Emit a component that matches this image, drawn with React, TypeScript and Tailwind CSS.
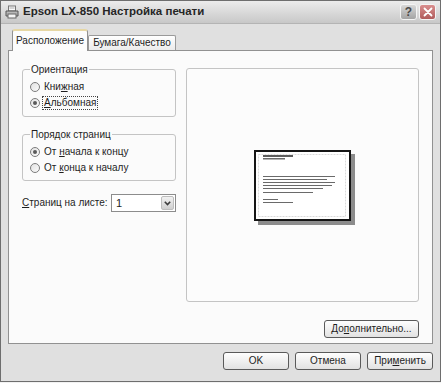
import React from "react";

function PrinterIcon() {
  return (
    <svg width="14" height="14" viewBox="0 0 14 14">
      <rect x="3.5" y="1" width="7" height="5" fill="#fafafa" stroke="#777" strokeWidth="1" />
      <path d="M1 6 L13 6 L13 11 L1 11 Z" fill="#b8b8b8" stroke="#555" strokeWidth="1" />
      <rect x="3" y="9" width="8" height="4" fill="#f4f4f4" stroke="#666" strokeWidth="1" />
      <line x1="4.5" y1="3" x2="9.5" y2="3" stroke="#999" strokeWidth="0.8" />
    </svg>
  );
}

function Radio({ checked, focus, children }: { checked?: boolean; focus?: boolean; children: React.ReactNode }) {
  return (
    <div className="h-[16px] flex items-center">
      <div className="w-[10px] h-[10px] rounded-full border border-[#7c7c7c] bg-gradient-to-br from-[#e2e2e2] to-[#fbfbfb] flex items-center justify-center">
        {checked && <div className="w-[4px] h-[4px] rounded-full bg-[#5a5a5a]" />}
      </div>
      <span className={"ml-[2px] px-[1px] leading-[12px] " + (focus ? "border border-dotted border-[#444]" : "border border-transparent")}>
        {children}
      </span>
    </div>
  );
}

function Btn({ w, children }: { w: string; children: React.ReactNode }) {
  return (
    <div
      className={
        w +
        " h-[18px] rounded-[3px] border border-[#5a5a5a] bg-gradient-to-b from-[#fefefe] to-[#e2e2e2] flex items-center justify-center text-[10px] text-[#1e1e1e]"
      }
    >
      {children}
    </div>
  );
}

export default function App() {
  return (
    <div className="w-[441px] h-[383px] bg-[#f2f2f2] font-['Liberation_Sans',Arial,sans-serif] text-[10px] text-[#1e1e1e] leading-none">
      <div className="w-[441px] h-[382px] border border-[#6e6e6e] flex flex-col bg-[#e0e0e0]">
        {/* title bar */}
        <div className="h-[23px] flex items-center pl-[4px] pr-[4px] bg-gradient-to-b from-[#ececec] to-[#c8c8c8] border-b border-[#b4b4b4]">
          <PrinterIcon />
          <span className="ml-[4px] font-bold text-[11.5px] text-[#262626]">Epson LX-850 Настройка печати</span>
          <div className="ml-auto flex gap-[2px]">
            <div className="w-[17px] h-[16px] rounded-[3px] border border-[#f4f4f4] bg-gradient-to-b from-[#d8d8d8] to-[#a4a4a4] flex items-center justify-center text-[12px] font-bold text-[#4a4a4a]">
              ?
            </div>
            <div className="w-[17px] h-[16px] rounded-[3px] border border-[#f4f4f4] bg-gradient-to-b from-[#d98e8e] to-[#b05c5c] flex items-center justify-center">
              <svg width="10" height="10" viewBox="0 0 10 10">
                <path d="M1.5 1.5 L8.5 8.5 M8.5 1.5 L1.5 8.5" stroke="#ffffff" strokeWidth="1.8" strokeLinecap="round" />
              </svg>
            </div>
          </div>
        </div>

        {/* body */}
        <div className="flex-1 flex flex-col px-[7px]">
          {/* tabs */}
          <div className="h-[26px] flex items-end pl-[4px]">
            <div className="relative z-10 -mb-px w-[76px] h-[22px] bg-[#fcfcfc] border border-b-0 border-[#919191] border-t-2 border-t-[#e6d7a4] rounded-t-[3px] flex items-center justify-center">
              Расположение
            </div>
            <div className="w-[88px] h-[15px] bg-gradient-to-b from-[#ffffff] to-[#ebebeb] border border-b-0 border-[#9a9a9a] rounded-t-[2px] flex items-center justify-center">
              Бумага/Качество
            </div>
          </div>

          {/* panel */}
          <div className="h-[294px] border border-[#919191] bg-[#fbfbfb] flex flex-col pt-[12px] px-[13px]">
            <div className="flex gap-[10px]">
              <div className="w-[154px] flex flex-col">
                <fieldset className="border border-[#c4c4c4] rounded-[3px] px-[7px] pt-[3px] pb-[5px]">
                  <legend className="px-[1px] leading-[13px]">Ориентация</legend>
                  <Radio>
                    Кни<span className="underline">ж</span>ная
                  </Radio>
                  <Radio checked focus>
                    <span className="underline">А</span>льбомная
                  </Radio>
                </fieldset>
                <fieldset className="mt-[11px] border border-[#c4c4c4] rounded-[3px] px-[7px] pt-[3px] pb-[4px]">
                  <legend className="px-[1px] leading-[13px]">Порядок страниц</legend>
                  <Radio checked>
                    От <span className="underline">н</span>ачала к концу
                  </Radio>
                  <Radio>
                    От <span className="underline">к</span>онца к началу
                  </Radio>
                </fieldset>
                <div className="mt-[13px] h-[18px] flex items-center">
                  <span>
                    <span className="underline">С</span>траниц на листе:
                  </span>
                  <div className="ml-auto w-[65px] h-[18px] border border-[#8c8c8c] bg-white flex items-center">
                    <span className="pl-[4px] text-[11px] flex-1">1</span>
                    <div className="w-[13px] h-[14px] mr-[1px] rounded-[2px] border border-[#bdbdbd] bg-gradient-to-b from-[#f2f2f2] to-[#cfcfcf] flex items-center justify-center">
                      <svg width="7" height="5" viewBox="0 0 7 5">
                        <path d="M0.8 0.8 L3.5 3.6 L6.2 0.8" fill="none" stroke="#3c3c3c" strokeWidth="1.6" />
                      </svg>
                    </div>
                  </div>
                </div>
              </div>

              {/* preview */}
              <div className="mt-[5px] w-[233px] h-[234px] border border-[#c4c4c4] rounded-[3px] bg-[#fcfcfc] flex items-center justify-center">
                <div className="w-[97px] h-[71px] border-2 border-[#151515] bg-white shadow-[4px_4px_0_#8c8c8c]">
                  <svg width="93" height="67" viewBox="0 0 93 67">
                    <rect x="2.5" y="2.5" width="87" height="62" fill="none" stroke="#dadada" strokeWidth="1" strokeDasharray="2 1" />
                    <rect x="7" y="3" width="30" height="2" fill="#5c5c5c" />
                    <rect x="7" y="6" width="22" height="1.5" fill="#6a6a6a" />
                    <rect x="7" y="24" width="72" height="1" fill="#6a6a6a" />
                    <rect x="7" y="27" width="64" height="1" fill="#6a6a6a" />
                    <rect x="7" y="30" width="72" height="1" fill="#6a6a6a" />
                    <rect x="7" y="33" width="69" height="1" fill="#6a6a6a" />
                    <rect x="7" y="36" width="60" height="1" fill="#6a6a6a" />
                    <rect x="7" y="40" width="50" height="1" fill="#6a6a6a" />
                    <rect x="7" y="47" width="15" height="1" fill="#6a6a6a" />
                    <rect x="7" y="50" width="30" height="1" fill="#6a6a6a" />
                  </svg>
                </div>
              </div>
            </div>

            <div className="mt-[18px] flex justify-end">
              <Btn w="w-[95px]">
                До<span className="underline">п</span>олнительно...
              </Btn>
            </div>
          </div>

          {/* bottom buttons */}
          <div className="flex-1 flex justify-end items-start pt-[8px] gap-[6px]">
            <Btn w="w-[66px]">OK</Btn>
            <Btn w="w-[66px]">Отмена</Btn>
            <Btn w="w-[66px]">
              При<span className="underline">м</span>енить
            </Btn>
          </div>
        </div>
      </div>
    </div>
  );
}
